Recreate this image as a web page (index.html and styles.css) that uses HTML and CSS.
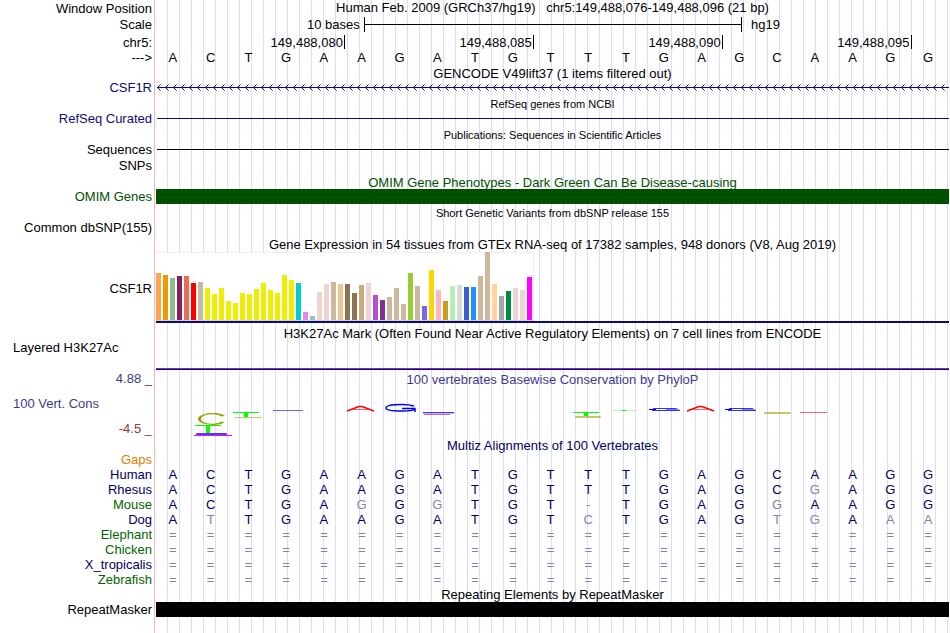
FILE: index.html
```
<!DOCTYPE html>
<html>
<head>
<meta charset="utf-8">
<title>CSF1R chr5:149,488,076-149,488,096</title>
<link rel="stylesheet" href="styles.css">
</head>
<body>
<div id="browser">

	<div class="row position">
		<div class="label">Window Position</div>
		<div class="data title">Human Feb. 2009 (GRCh37/hg19) &nbsp; chr5:149,488,076-149,488,096 (21 bp)</div>
	</div>
	<div class="row scale">
		<div class="label">Scale</div>
		<div class="data">
			<span class="bases">10 bases</span>
			<span class="scalebar"></span>
			<span>hg19</span>
		</div>
	</div>
	<div class="row">
		<div class="label">chr5:</div>
		<div class="data ruler">
			<span>149,488,080</span>
			<span>149,488,085</span>
			<span>149,488,090</span>
			<span>149,488,095</span>
		</div>
	</div>
	<div class="row strand">
		<div class="label">---&gt;</div>
		<div class="data"><div class="seq" data-seq="ACTGAAGATGTTTGAGCAAGG"></div></div>
	</div>

	<!-- genes -->
	<div class="row head">
		<div class="label"></div>
		<div class="data title">GENCODE V49lift37 (1 items filtered out)</div>
	</div>
	<div class="row navy">
		<div class="label">CSF1R</div>
		<div class="data">
			<svg class="intron" width="100%" height="15">
				<defs>
					<pattern id="chevron" width="8" height="15" patternUnits="userSpaceOnUse">
						<path d="M4.5 4.5L1.5 7.5L4.5 10.5" fill="none" stroke="#0c0c78"/>
					</pattern>
				</defs>
				<rect width="100%" height="15" fill="url(#chevron)"/>
				<rect x="1" y="7" width="100%" height="1" fill="#0c0c78"/>
			</svg>
		</div>
	</div>
	<div class="row head small">
		<div class="label"></div>
		<div class="data title">RefSeq genes from NCBI</div>
	</div>
	<div class="row navy">
		<div class="label">RefSeq Curated</div>
		<div class="data"><div class="line"></div></div>
	</div>
	<div class="row head small">
		<div class="label"></div>
		<div class="data title">Publications: Sequences in Scientific Articles</div>
	</div>
	<div class="row">
		<div class="label">Sequences</div>
		<div class="data"><div class="line"></div></div>
	</div>
	<div class="row snps">
		<div class="label">SNPs</div>
		<div class="data"></div>
	</div>
	<div class="row head omim">
		<div class="label"></div>
		<div class="data title">OMIM Gene Phenotypes - Dark Green Can Be Disease-causing</div>
	</div>
	<div class="row omim">
		<div class="label">OMIM Genes</div>
		<div class="data"><div class="bar"></div></div>
	</div>
	<div class="row head small">
		<div class="label"></div>
		<div class="data title">Short Genetic Variants from dbSNP release 155</div>
	</div>
	<div class="row">
		<div class="label">Common dbSNP(155)</div>
		<div class="data"></div>
	</div>

	<!-- expression -->
	<div class="row head">
		<div class="label"></div>
		<div class="data title">Gene Expression in 54 tissues from GTEx RNA-seq of 17382 samples, 948 donors (V8, Aug 2019)</div>
	</div>
	<div class="row gtex">
		<div class="label">CSF1R</div>
		<div class="data"><div id="tissues"></div></div>
	</div>

	<!-- regulation -->
	<div class="row head">
		<div class="label"></div>
		<div class="data title">H3K27Ac Mark (Often Found Near Active Regulatory Elements) on 7 cell lines from ENCODE</div>
	</div>
	<div class="row h3k">
		<div class="label left">Layered H3K27Ac</div>
		<div class="data"></div>
	</div>

	<!-- conservation -->
	<div class="row head cons">
		<div class="label">4.88 _</div>
		<div class="data title">100 vertebrates Basewise Conservation by PhyloP</div>
	</div>
	<div class="row cons phylop">
		<div class="label">
			<div class="left">100 Vert. Cons</div>
			<div class="min">-4.5 _</div>
		</div>
		<div class="data">
			<svg width="100%" height="50" viewBox="0 0 793 50" preserveAspectRatio="none">
				<g fill="#a0a000">
					<path d="M69 29A14.5 6 0 1 0 69 35L65.5 34.5A11 4.8 0 1 1 65.5 29.5Z"/>
					<rect x="79" y="30" width="27" height="1" opacity=".6"/>
					<rect x="419" y="29" width="26" height="2" rx="1" opacity=".6"/>
					<rect x="608" y="25" width="27" height="2" rx="1" opacity=".6"/>
				</g>
				<g fill="#00ff00">
					<rect x="39" y="38" width="26" height="1"/>
					<rect x="50" y="39" width="4" height="7"/>
					<rect x="77" y="25" width="26" height="1"/>
					<rect x="88" y="26" width="4" height="4"/>
					<rect x="417" y="25" width="26" height="1"/>
					<rect x="428" y="25" width="4" height="4"/>
					<rect x="455" y="23" width="26" height="1" opacity=".3"/>
					<rect x="466" y="23" width="4" height="1"/>
				</g>
				<g fill="#4040ff">
					<rect x="40" y="46" width="31" height="2" rx="1"/>
					<rect x="117" y="23" width="30" height="1" opacity=".8"/>
					<rect x="267" y="25" width="31" height="1"/>
					<rect x="267" y="26" width="31" height="1" opacity=".4"/>
				</g>
				<rect x="38" y="48" width="38" height="1" fill="#ff00ff"/>
				<g fill="none" stroke="#0000ff">
					<path d="M258 19Q253 17.5 246 17.5Q230 17.5 230 21Q230 24 246 24Q259 24 259 21.5H246M259 21V25" stroke-width="1.5"/>
				</g>
				<g fill="#0000ff">
					<rect x="497" y="21" width="24" height="1" opacity=".8"/>
					<rect x="493" y="22" width="7" height="1"/>
					<rect x="510" y="22" width="13" height="1" opacity=".5"/>
					<rect x="496" y="23" width="28" height="1" opacity=".8"/>
					<rect x="573" y="21" width="24" height="1" opacity=".8"/>
					<rect x="569" y="22" width="7" height="1"/>
					<rect x="586" y="22" width="13" height="1" opacity=".5"/>
					<rect x="572" y="23" width="28" height="1" opacity=".8"/>
				</g>
				<g fill="none" stroke="#ff0000">
					<path d="M191 24L203 19.5H206L218 24" stroke-width="1.5"/>
					<path d="M197 22.5H212" opacity=".6"/>
					<path d="M531 24L543 19.5H546L558 24" stroke-width="1.5"/>
					<path d="M537 22.5H552" opacity=".6"/>
					<path d="M268 27.5H294M644 25.5H671" opacity=".6"/>
				</g>
			</svg>
		</div>
	</div>
	<div class="row head navy multiz">
		<div class="label"></div>
		<div class="data title">Multiz Alignments of 100 Vertebrates</div>
	</div>
	<div class="row gaps">
		<div class="label">Gaps</div>
		<div class="data"></div>
	</div>
	<div id="species"></div>

	<!-- repeats -->
	<div class="row repeats">
		<div class="label"></div>
		<div class="data title">Repeating Elements by RepeatMasker</div>
	</div>
	<div class="row">
		<div class="label">RepeatMasker</div>
		<div class="data"><div class="bar"></div></div>
	</div>
	<div class="row end">
		<div class="label"></div>
		<div class="data"></div>
	</div>
</div>

<script>
var human = "ACTGAAGATGTTTGAGCAAGG";
var gap = "=====================";

var species = [
	["Human", "navy", human],
	["Rhesus", "navy", "ACTGAAGATGTTTGAGCGAGG"],
	["Mouse", "green", "ACTGAGGGTGT-TGAGGAAGG"],
	["Dog", "navy", "ATTGAAGATGTCTGAGTGAAA"],
	["Elephant", "green", gap],
	["Chicken", "green", gap],
	["X_tropicalis", "navy", gap],
	["Zebrafish", "green", gap]
];

// bar height, colour
var tissues = [
	[47,"#ffa54f"],[45,"#ee9a00"],[42,"#8fbc8f"],[44,"#8b1c62"],[44,"#ee6a50"],[37,"#ff0000"],
	[38,"#cdb79e"],[32,"#eeee00"],[26,"#eeee00"],[32,"#eeee00"],[19,"#eeee00"],[17,"#eeee00"],
	[27,"#eeee00"],[26,"#eeee00"],[31,"#eeee00"],[37,"#eeee00"],[30,"#eeee00"],[27,"#eeee00"],
	[45,"#eeee00"],[40,"#eeee00"],[37,"#00cdcd"],[8,"#ee82ee"],[4,"#9ac0cd"],[28,"#eed5d2"],
	[36,"#eed5d2"],[38,"#cdb79e"],[36,"#eec591"],[36,"#8b7355"],[27,"#8b7355"],[35,"#cdaa7d"],
	[37,"#eed5d2"],[25,"#b452cd"],[20,"#7a378b"],[23,"#cdb79e"],[32,"#cdb79e"],[16,"#cdb79e"],
	[47,"#9acd32"],[34,"#cdb79e"],[14,"#7a67ee"],[50,"#ffd700"],[30,"#ffb6c1"],[19,"#cd9b1d"],
	[34,"#b4eeb4"],[35,"#d9d9d9"],[33,"#3a5fcd"],[33,"#1e90ff"],[44,"#cdb79e"],[68,"#cdb79e"],
	[36,"#ffd39b"],[24,"#a6a6a6"],[29,"#008b45"],[32,"#eed5d2"],[30,"#eed5d2"],[43,"#ff00ff"]
];

function letters(seq, ref) {
	var html = "";
	for (var i = 0; i < seq.length; i++) {
		html += "<span" + (ref && seq[i] != ref[i] ? " class='diff'" : "") + ">" + seq[i] + "</span>";
	}
	return html;
}

var strand = document.querySelector("[data-seq]");
strand.innerHTML = letters(strand.getAttribute("data-seq"));

document.querySelector("#species").innerHTML = species.map(function(s) {
	return "<div class='row " + s[1] + "'><div class='label'>" + s[0] + "</div>" +
		"<div class='data'><div class='seq'>" + letters(s[2], human) + "</div></div></div>";
}).join("");

document.querySelector("#tissues").innerHTML = tissues.map(function(t) {
	return "<i style='height:" + t[0] + "px;background:" + t[1] + "'></i>";
}).join("");
</script>
</body>
</html>
```
FILE: styles.css
```
body {
	margin: 0;
	background: #fff;
	color: #000;
	font: 13px/15px "Liberation Sans", Arial, sans-serif;
}
.row {
	display: grid;
	grid-template-columns: 155px 1fr;
	column-gap: 1px;
	min-height: 15px;
	margin-right: 1px;
}
.label {
	padding-right: 2px;
	border-right: 1px solid #ffb4b4;
	text-align: right;
	white-space: nowrap;
}
.left {
	padding-left: 13px;
	text-align: left;
}
/* guide line every 12px */
.data {
	background: linear-gradient(90deg, transparent 11px, #dcdcff 11px) 0 0 / 12px 100%;
	min-width: 0;
	white-space: nowrap;
}
.title {
	text-align: center;
}
.head {
	height: 16px;
}
.head .data {
	padding-top: 2px;
}
.head .label {
	padding-top: 1px;
}
.small .data {
	padding-top: 1px;
	height: 16px;
	font-size: 11px;
}
.head.small .data {
	padding-top: 2px;
	height: 14px;
}
.position {
	min-height: 17px;
}
.position .label {
	padding-top: 1px;
}
.scale {
	min-height: 18px;
}
.scale .data {
	display: flex;
}
.bases {
	box-sizing: border-box;
	width: 26.2%;
	padding-right: 4px;
	text-align: right;
}
.scalebar {
	box-sizing: border-box;
	width: 47.7%;
	height: 15px;
	margin-right: 9px;
	border: solid #000;
	border-width: 0 1px;
	background: linear-gradient(#000, #000) 0 7px / 100% 1px no-repeat;
}
.ruler {
	display: grid;
	grid-template-columns: repeat(4, 23.82%);
}
.ruler span {
	height: 14px;
	padding-right: 1px;
	border-right: 1px solid #000;
	text-align: right;
}
.strand {
	height: 14px;
	min-height: 14px;
}
.seq {
	display: grid;
	grid-template-columns: repeat(21, 1fr);
	margin: 0 2px 0 -2px;
	text-align: center;
}
.navy {
	color: #0c0c78;
}
.green {
	color: #006400;
}
#species .navy, .multiz {
	color: #000064;
}
.green .seq {
	color: #000064;
}
#species .diff {
	color: #8282b4;
}
.intron {
	display: block;
}
.line {
	height: 1px;
	margin: 7px 0 0 1px;
	background: currentColor;
}
.bar {
	height: 15px;
	background: currentColor;
}
.snps {
	min-height: 16px;
}
.snps .label {
	padding-top: 1px;
}
.omim {
	color: #005000;
}
.gtex .data {
	padding: 1px 0;
}
.gtex .label {
	display: flex;
	align-items: center;
	justify-content: flex-end;
	padding-top: 2px;
}
#tissues {
	display: flex;
	align-items: flex-end;
	gap: 2px;
	box-sizing: border-box;
	width: 378px;
	height: 69px;
	background: #fff;
	box-shadow: inset 0 1px #f0f0f0, inset -1px 0 #f0f0f0;
	border-bottom: 1px solid #d0d0d0;
}
#tissues i {
	width: 5px;
}
.gtex .data::after {
	content: "";
	display: block;
	height: 2px;
	background: #0c0c78;
}
.h3k .data {
	display: flex;
	align-items: flex-end;
	height: 30px;
}
.h3k .data::after {
	content: "";
	flex: 1;
	height: 1px;
	background: #7030d0;
	border-bottom: 1px solid #32006e;
}
.cons {
	color: #3c3c8c;
}
.head.cons {
	height: 17px;
}
.phylop {
	height: 49px;
}
.phylop svg {
	display: block;
}
.phylop .left {
	padding-top: 9px;
}
.min {
	padding-top: 10px;
	color: #8c3c3c;
}
.gaps {
	color: #e08000;
}
.end {
	min-height: 16px;
}
```
